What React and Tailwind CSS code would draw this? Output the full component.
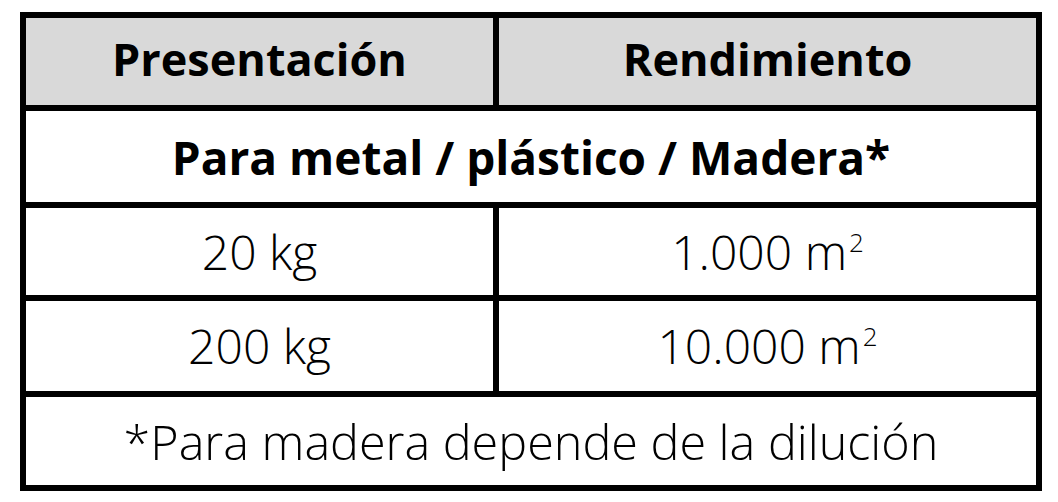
function Sup() {
  return <span className="relative top-[-18px] ml-[2px] text-[26px]">2</span>;
}

export default function App() {
  const font = { fontFamily: "'Open Sans', 'Liberation Sans', sans-serif" };
  return (
    <div className="w-[1058px] h-[502px] bg-white pt-[12px] pl-[20px] text-black" style={font}>
      <div className="w-[1022px] border-[6px] border-black flex flex-col">
        {/* header */}
        <div className="flex h-[93px] border-b-[6px] border-black bg-[#d9d9d9] text-[45px] font-bold">
          <div className="w-[473px] border-r-[6px] border-black flex items-center justify-center pb-[6px] leading-none">
            Presentación
          </div>
          <div className="flex-1 flex items-center justify-center pb-[6px] leading-none">
            Rendimiento
          </div>
        </div>
        {/* subtitle */}
        <div className="h-[97px] border-b-[6px] border-black flex items-center justify-center text-[46px] font-bold leading-none">
          Para metal / plástico / Madera*
        </div>
        {/* row 20kg */}
        <div className="flex h-[93px] border-b-[6px] border-black text-[48px] font-light leading-none">
          <div className="w-[473px] border-r-[6px] border-black flex items-center justify-center">
            20 kg
          </div>
          <div className="flex-1 flex items-center justify-center">
            <span>
              1.000 m<Sup />
            </span>
          </div>
        </div>
        {/* row 200kg */}
        <div className="flex h-[96px] border-b-[6px] border-black text-[48px] font-light leading-none">
          <div className="w-[473px] border-r-[6px] border-black flex items-center justify-center">
            200 kg
          </div>
          <div className="flex-1 flex items-center justify-center">
            <span>
              10.000 m<Sup />
            </span>
          </div>
        </div>
        {/* footer */}
        <div className="h-[88px] flex items-center justify-center text-[48.5px] font-light leading-none">
          *Para madera depende de la dilución
        </div>
      </div>
    </div>
  );
}
